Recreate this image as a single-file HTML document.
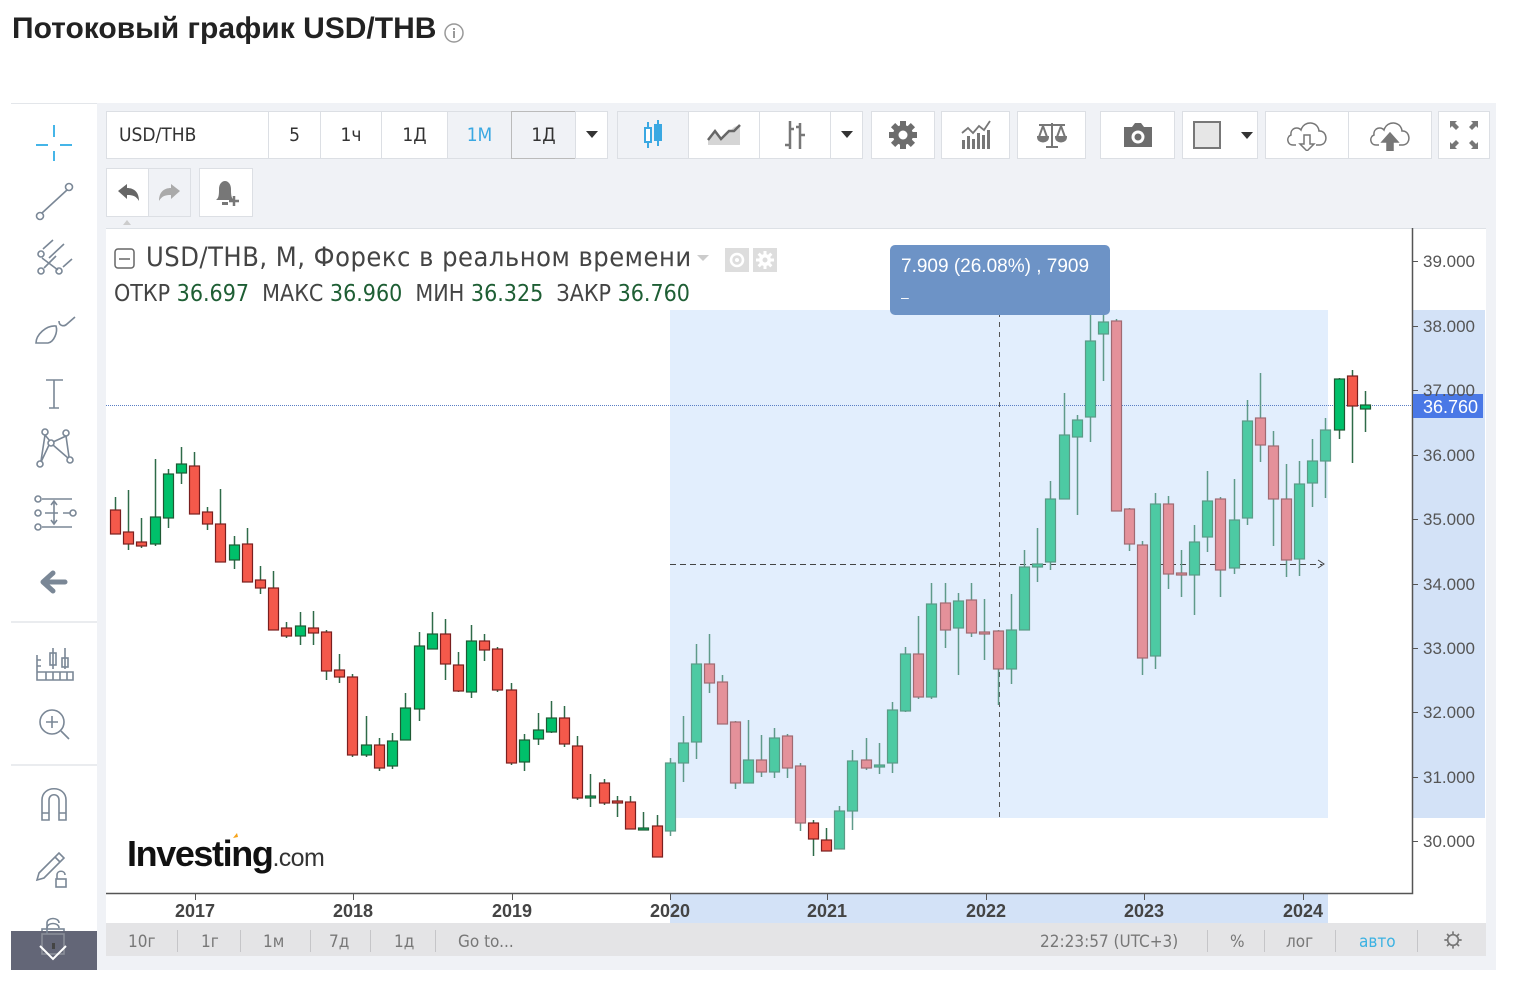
<!DOCTYPE html>
<html><head><meta charset="utf-8">
<style>
*{margin:0;padding:0;box-sizing:border-box}
body{width:1524px;height:986px;background:#fff;position:relative;overflow:hidden;font-family:"Liberation Sans","DejaVu Sans",sans-serif;color:#333}
.abs{position:absolute}
h1{position:absolute;left:12px;top:12px;font-size:30px;font-weight:bold;color:#222;letter-spacing:0px}
.panel{position:absolute;left:97px;top:103px;width:1399px;height:867px;background:#f0f2f6}
.side{position:absolute;left:11px;top:103px;width:86px;height:867px;background:#fff;border-top:1px solid #e3e6ea}
.btn{position:absolute;background:#fff;border:1px solid #dcdfe4;display:flex;align-items:center;justify-content:center;font-size:19px;color:#333;font-family:"DejaVu Sans Condensed","DejaVu Sans",sans-serif;font-stretch:condensed}
.cond{font-family:"DejaVu Sans Condensed","DejaVu Sans",sans-serif;font-stretch:condensed}
.bb{position:absolute;top:923px;height:33px;left:106px;width:1380px;background:#e4e4e6}
.bb span{position:absolute;top:9px;font-size:17px;color:#777;font-family:"DejaVu Sans Condensed","DejaVu Sans",sans-serif;font-stretch:condensed}
.bb i{position:absolute;top:7px;width:1px;height:22px;background:#c5c5c8}
</style></head><body>
<h1>Потоковый график USD/THB</h1>
<svg class="abs" style="left:443px;top:22px" width="22" height="22" viewBox="0 0 22 22"><circle cx="11" cy="11" r="9" fill="none" stroke="#999" stroke-width="1.5"/><rect x="10" y="9" width="2" height="7" fill="#999"/><rect x="10" y="6" width="2" height="2" fill="#999"/></svg>

<div class="panel"></div>
<div class="side"></div>

<svg class="abs" style="left:11px;top:103px" width="86" height="867" viewBox="0 0 86 867" fill="none" stroke="#7a8796" stroke-width="1.6">
 <g stroke="#45b5e8" stroke-width="2"><path d="M25 42h12M49 42h12M43 22v12M43 48v10"/></g>
 <path d="M31 110L56 87"/><circle cx="29" cy="113" r="3.5"/><circle cx="58" cy="84" r="3.5"/>
 <path d="M32 146l10 -9M38 155l15 -14M52 164l9 -8" /><circle cx="30" cy="151" r="3"/><circle cx="30" cy="168" r="3"/><circle cx="48" cy="168" r="3"/><path d="M31 155l16 12M33 165l12 -12"/>
 <path d="M25 240c0-8 10-18 20-17c2 6-2 16-8 17z"/><path d="M48 218c0 5 5 6 8 3l8-7"/>
 <path d="M35 277h17M43 277v28M38 305h10"/>
 <circle cx="34" cy="329" r="3"/><circle cx="55" cy="330" r="3"/><circle cx="40" cy="340" r="3"/><circle cx="29" cy="361" r="3"/><circle cx="59" cy="357" r="3"/><path d="M34 332l-4 26M34 332l5 6M55 333l-13 6M55 333l3 21M42 342l15 13M38 342l-8 17"/>
 <path d="M31 396h30M34 410h13M52 410h7M31 424h30M43 398v23"/><circle cx="27" cy="396" r="3"/><circle cx="27" cy="410" r="3"/><circle cx="27" cy="424" r="3"/><circle cx="62" cy="410" r="3"/><path d="M40 402l3-4 3 4M40 417l3 4 3-4"/>
 <path d="M34 479h20M42 470l-10 9 10 9" stroke-width="5" stroke-linecap="round" stroke-linejoin="round"/>
 <path d="M0 519h86" stroke="#e3e6ea"/>
 <path d="M26 552v25h36v-8H26M35 569v8M42 569v8M49 569v8M56 569v8M26 557h4M26 563h4M42 545v21M54 545v21"/><rect x="39" y="550" width="6" height="12"/><rect x="51" y="555" width="6" height="9"/>
 <circle cx="41" cy="619" r="12"/><path d="M50 628l8 8M35 619h12M41 613v12"/>
 <path d="M0 662h86" stroke="#e3e6ea"/>
 <path d="M31 717v-20c0-15 24-15 24 0v20h-7v-20c0-7-10-7-10 0v20z M31 710h7M48 710h7"/>
 <path d="M28 770l20-20 5 5-20 20-7 2zM44 754l5 5"/><path d="M46 776v-4c0-5 8-5 8 0" /><rect x="45" y="776" width="10" height="8"/>
 <path d="M36 826v-6c0-6 12-6 12 0"/><rect x="31" y="826" width="22" height="20"/>
</svg>
<div class="abs" style="left:11px;top:931px;width:86px;height:39px;background:#636677"></div>
<svg class="abs" style="left:11px;top:910px" width="86" height="60" fill="none" stroke="#7a8796" stroke-width="1.6"><path d="M36 24v-6c0-6 12-6 12 0"/><rect x="31" y="24" width="22" height="20" stroke="#8a8e99"/><path d="M29 36l13 13 13-13" stroke="#fff" stroke-width="2"/><rect x="41" y="33" width="3" height="6" fill="#444" stroke="none"/></svg>

<div class="btn" style="left:106px;top:111px;width:163px;height:48px;justify-content:flex-start;padding-left:12px">USD/THB</div>
<div class="btn" style="left:268px;top:111px;width:53px;height:48px">5</div>
<div class="btn" style="left:320px;top:111px;width:62px;height:48px">1ч</div>
<div class="btn" style="left:381px;top:111px;width:67px;height:48px">1Д</div>
<div class="btn" style="left:447px;top:111px;width:65px;height:48px;background:#f0f2f6;color:#3aa8e2">1М</div>
<div class="btn" style="left:511px;top:111px;width:65px;height:48px;background:#f0f2f6;border-color:#bbb">1Д</div>
<div class="btn" style="left:575px;top:111px;width:33px;height:48px"><svg width="12" height="8"><path d="M0 0h12L6 7z" fill="#333"/></svg></div>

<div class="btn" style="left:617px;top:111px;width:72px;height:48px;background:#f0f2f6"><svg width="26" height="34" fill="none" stroke="#3aa8e2" stroke-width="2"><path d="M8 4v26M18 2v26"/><rect x="5" y="10" width="6" height="14" fill="#fff"/><rect x="15" y="7" width="6" height="15" fill="#3aa8e2"/></svg></div>
<div class="btn" style="left:688px;top:111px;width:72px;height:48px"><svg width="34" height="22"><path d="M1 21V14l7-7 6 7 8-6 5-5 6-2v20z" fill="#d5d5d5"/><path d="M1 16l7-9 6 8 8-8 5 0 6-6" fill="none" stroke="#666" stroke-width="2.5"/></svg></div>
<div class="btn" style="left:759px;top:111px;width:72px;height:48px"><svg width="28" height="32" fill="none" stroke="#777" stroke-width="2.5"><path d="M9 2v28M4 26h5M9 10h4M19 4v26M19 16h5M15 8h4"/></svg></div>
<div class="btn" style="left:830px;top:111px;width:33px;height:48px"><svg width="12" height="8"><path d="M0 0h12L6 7z" fill="#333"/></svg></div>

<div class="btn" style="left:871px;top:111px;width:64px;height:48px"><svg width="30" height="30" viewBox="0 0 30 30"><g fill="#6d6d6d"><circle cx="15" cy="15" r="10"/><rect x="12" y="1" width="6" height="28"/><rect x="1" y="12" width="28" height="6"/><rect x="12" y="1" width="6" height="28" transform="rotate(45 15 15)"/><rect x="12" y="1" width="6" height="28" transform="rotate(-45 15 15)"/></g><circle cx="15" cy="15" r="4.5" fill="#fff"/></svg></div>
<div class="btn" style="left:941px;top:111px;width:69px;height:48px"><svg width="32" height="30" fill="#777"><rect x="2" y="20" width="3" height="9"/><rect x="7" y="16" width="3" height="13"/><rect x="12" y="19" width="3" height="10"/><rect x="17" y="13" width="3" height="16"/><rect x="22" y="15" width="3" height="14"/><rect x="27" y="10" width="3" height="19"/><path d="M2 13l6-5 5 5 6-7 5 4 6-9" fill="none" stroke="#777" stroke-width="1.8"/></svg></div>
<div class="btn" style="left:1017px;top:111px;width:69px;height:48px"><svg width="32" height="28" fill="none" stroke="#777" stroke-width="2"><path d="M3 4h26M16 2v24M10 26h12M7 5l-4 11M7 5l4 11M25 5l-4 11M25 5l4 11"/><path d="M2 16h10c0 6-10 6-10 0zM20 16h10c0 6-10 6-10 0z" fill="#777"/></svg></div>
<div class="btn" style="left:1100px;top:111px;width:75px;height:48px"><svg width="34" height="28"><path d="M3 6h8l3-4h6l3 4h8v20H3z" fill="#6d6d6d"/><circle cx="17" cy="16" r="6.5" fill="#fff"/><circle cx="17" cy="16" r="3.5" fill="#6d6d6d"/></svg></div>
<div class="btn" style="left:1182px;top:111px;width:76px;height:48px;justify-content:flex-start;padding-left:10px"><svg width="60" height="30"><rect x="1" y="2" width="26" height="26" fill="#e6e6e6" stroke="#777" stroke-width="2"/><path d="M48 12h12l-6 7z" fill="#333"/></svg></div>
<div class="btn" style="left:1265px;top:111px;width:84px;height:48px"><svg width="46" height="32" fill="none" stroke="#777" stroke-width="1.5"><path d="M12 26H9C3 26 2 18 7 16c-1-7 7-9 10-5 3-10 17-9 18 1 8-1 10 13 1 14h-4"/><path d="M20 16h6v9h4l-7 7-7-7h4z"/></svg></div>
<div class="btn" style="left:1348px;top:111px;width:84px;height:48px"><svg width="46" height="32" fill="none" stroke="#777" stroke-width="1.5"><path d="M12 26H9C3 26 2 18 7 16c-1-7 7-9 10-5 3-10 17-9 18 1 8-1 10 13 1 14h-4"/><path d="M20 32V23h-5l8-9 8 9h-5v9z" fill="#777"/></svg></div>
<div class="btn" style="left:1438px;top:111px;width:52px;height:48px"><svg width="30" height="30" fill="#777"><path d="M1 1h7l-2 2 4 4-3 3-4-4-2 2zM29 1h-7l2 2-4 4 3 3 4-4 2 2zM1 29h7l-2-2 4-4-3-3-4 4-2-2zM29 29h-7l2-2-4-4 3-3 4 4 2-2z"/></svg></div>

<div class="btn" style="left:106px;top:168px;width:43px;height:49px"><svg width="24" height="20"><path d="M2 8l9-7v4c7 0 12 4 12 13-3-5-6-6-12-6v4z" fill="#666"/></svg></div>
<div class="btn" style="left:148px;top:168px;width:43px;height:49px;background:#f0f2f6"><svg width="24" height="20"><path d="M22 8l-9-7v4C6 5 1 9 1 18c3-5 6-6 12-6v4z" fill="#aaa"/></svg></div>
<div class="btn" style="left:199px;top:168px;width:54px;height:49px"><svg width="32" height="30"><path d="M6 22c3-2 3-6 3-11 0-5 3-8 6-8s6 3 6 8c0 5 0 9 3 11z" fill="#777"/><rect x="12" y="24" width="6" height="3" fill="#777"/><path d="M24 18v10M19 23h10" stroke="#777" stroke-width="2.5"/></svg></div>
<svg class="abs" style="left:120px;top:218px" width="14" height="8"><path d="M3 7l4-5 4 5z" fill="#ccc"/></svg>

<svg class="abs" style="left:0;top:0" width="1524" height="986" id="ch">
 <rect x="106" y="228" width="1380" height="695" fill="#fff"/>
 <rect x="106" y="228" width="1380" height="1" fill="#dde1e6"/>
 <rect x="670" y="310" width="658" height="508" fill="#e2eefd"/>
 <rect x="670" y="894" width="658" height="29" fill="#d3e2f7"/>
 <rect x="1413" y="310" width="72" height="508" fill="#d3e2f7"/>
 <path d="M670 564.5H1322" stroke="#444" stroke-dasharray="6 4" stroke-width="1"/>
 <path d="M1318 560l6 4-6 4" stroke="#444" fill="none"/>
 <path d="M999.5 312V818" stroke="#555" stroke-dasharray="5 5" stroke-width="1"/>
 <path d="M106 405.5H1412" stroke="#5a7ec4" stroke-dasharray="1 1" stroke-width="1"/>
 <g id="cd"></g>
 <path d="M106 893.5H1412.5V228" stroke="#555" stroke-width="1.5" fill="none"/>
 <g stroke="#555" id="ticks"></g>
 <rect x="1413" y="394" width="70" height="24" fill="#4a78e6"/>
 <text x="1423" y="413" fill="#fff" font-size="18" font-family="Liberation Sans">36.760</text>
 <g font-family="Liberation Sans" font-size="17" fill="#555">
  <text x="1423" y="267">39.000</text><text x="1423" y="332">38.000</text><text x="1423" y="396">37.000</text>
  <text x="1423" y="461">36.000</text><text x="1423" y="525">35.000</text><text x="1423" y="590">34.000</text>
  <text x="1423" y="654">33.000</text><text x="1423" y="718">32.000</text><text x="1423" y="783">31.000</text><text x="1423" y="847">30.000</text>
 </g>
 <g font-family="Liberation Sans" font-size="18" font-weight="bold" fill="#444" text-anchor="middle">
  <text x="195" y="917">2017</text><text x="353" y="917">2018</text><text x="512" y="917">2019</text><text x="670" y="917">2020</text>
  <text x="827" y="917">2021</text><text x="986" y="917">2022</text><text x="1144" y="917">2023</text><text x="1303" y="917">2024</text>
 </g>
 <rect x="890" y="245" width="220" height="70" rx="5" fill="#6d93c6"/>
 <text x="901" y="272" fill="#fff" font-size="19" font-family="Liberation Sans">7.909 (26.08%) , 7909</text>
 <text x="901" y="302" fill="#fff" font-size="14" font-family="Liberation Sans">–</text>
 <text x="127" y="866" font-family="Liberation Sans" font-size="36" font-weight="bold" fill="#111" letter-spacing="-1.4">Investing<tspan font-size="25" font-weight="normal" fill="#333" letter-spacing="-0.6">.com</tspan></text>
 <path d="M233 838l4-5 1 4z" fill="#f6a31a"/>
</svg>

<svg class="abs" style="left:114px;top:248px" width="22" height="22"><rect x="1" y="1" width="19" height="19" rx="3" fill="#fff" stroke="#666" stroke-width="1.5"/><path d="M5 11h11" stroke="#666" stroke-width="1.5"/></svg>
<div class="abs cond" style="left:146px;top:242px;font-size:27px;letter-spacing:0.5px;color:#444;white-space:nowrap">USD/THB, М, Форекс в реальном времени</div>
<svg class="abs" style="left:697px;top:255px" width="12" height="8"><path d="M0 0h12L6 6z" fill="#ccc"/></svg>
<div class="abs" style="left:725px;top:248px;width:24px;height:24px;background:#ddd"></div>
<svg class="abs" style="left:725px;top:248px" width="24" height="24"><circle cx="12" cy="12" r="6" fill="none" stroke="#fff" stroke-width="2.5"/><circle cx="12" cy="12" r="2" fill="#fff"/></svg>
<div class="abs" style="left:753px;top:248px;width:24px;height:24px;background:#ddd"></div>
<svg class="abs" style="left:753px;top:248px" width="24" height="24"><g fill="#fff"><circle cx="12" cy="12" r="6"/><rect x="10.5" y="3" width="3" height="18"/><rect x="3" y="10.5" width="18" height="3"/><rect x="10.5" y="3" width="3" height="18" transform="rotate(45 12 12)"/><rect x="10.5" y="3" width="3" height="18" transform="rotate(-45 12 12)"/></g><circle cx="12" cy="12" r="2.5" fill="#ddd"/></svg>
<div class="abs cond" style="left:114px;top:281px;font-size:23px;color:#444;white-space:nowrap;letter-spacing:0px">ОТКР <span style="color:#1e5e34">36.697</span>&nbsp;&nbsp;МАКС <span style="color:#1e5e34">36.960</span>&nbsp;&nbsp;МИН <span style="color:#1e5e34">36.325</span>&nbsp;&nbsp;ЗАКР <span style="color:#1e5e34">36.760</span></div>

<div class="bb">
 <span style="left:22px">10г</span><i style="left:71px"></i>
 <span style="left:95px">1г</span><i style="left:134px"></i>
 <span style="left:157px">1м</span><i style="left:204px"></i>
 <span style="left:223px">7д</span><i style="left:264px"></i>
 <span style="left:288px">1д</span><i style="left:329px"></i>
 <span style="left:352px">Go to...</span>
 <span style="left:934px">22:23:57 (UTC+3)</span><i style="left:1101px"></i>
 <span style="left:1124px">%</span><i style="left:1158px"></i>
 <span style="left:1180px">лог</span><i style="left:1229px"></i>
 <span style="left:1253px;color:#3cb2e2">авто</span><i style="left:1311px"></i>
 <svg style="position:absolute;left:1337px;top:7px" width="20" height="20" viewBox="0 0 30 30"><g fill="none" stroke="#777" stroke-width="2.5"><circle cx="15" cy="15" r="8"/><path d="M15 2v6M15 22v6M2 15h6M22 15h6M6 6l4 4M20 20l4 4M24 6l-4 4M10 20l-4 4"/></g></svg>
</div>

<script>
var C=[[115,497,510,534,534,0],[128,490,532,544,550,0],[141,518,542,546,548,0],[155,459,517,544,546,1],[168,469,474,518,528,1],[181,447,464,473,484,1],[194,452,466,514,514,0],[207,507,512,524,530,0],[220,489,524,562,562,0],[234,536,545,560,569,1],[247,528,544,582,582,0],[260,566,580,588,594,0],[273,571,588,630,630,0],[286,622,628,636,638,0],[300,612,626,636,645,1],[313,611,628,633,645,0],[326,630,632,671,680,0],[339,654,670,677,683,0],[352,674,677,755,757,0],[366,716,745,755,757,1],[379,738,745,768,771,0],[392,733,741,766,769,1],[405,693,708,740,740,1],[419,632,646,709,721,1],[432,612,634,649,649,1],[445,619,634,664,680,0],[458,652,665,691,692,0],[471,625,641,692,698,1],[484,634,641,650,661,0],[497,647,649,690,692,0],[511,683,690,763,765,0],[524,734,740,762,771,1],[538,713,730,739,745,1],[551,701,718,732,733,1],[564,706,718,744,747,0],[577,736,746,798,800,0],[590,774,796,798,807,1],[604,779,783,803,805,0],[617,796,801,803,817,0],[630,796,802,829,829,0],[643,812,828,829,829,1],[657,815,826,857,857,0],[670,758,763,831,836,1],[683,716,743,763,782,1],[696,644,664,742,759,1],[709,634,664,683,693,0],[722,675,682,724,724,0],[735,721,722,783,789,0],[748,720,760,783,783,1],[761,735,760,772,777,0],[774,728,738,772,778,1],[787,734,736,768,778,0],[800,763,766,823,831,0],[813,820,823,839,856,0],[826,828,840,851,851,0],[839,806,811,849,849,1],[852,750,761,811,830,1],[866,738,760,768,770,0],[879,743,765,767,774,1],[892,702,710,763,773,1],[905,647,654,711,712,1],[918,616,654,697,699,0],[931,583,604,697,699,1],[945,583,603,630,648,0],[958,593,601,628,675,1],[971,583,600,633,637,0],[984,599,632,634,660,0],[998,630,631,669,705,0],[1011,594,630,669,684,1],[1024,550,567,630,630,1],[1037,528,564,567,582,1],[1050,481,499,562,570,1],[1064,393,435,499,499,1],[1077,415,420,437,515,1],[1090,296,341,417,442,1],[1103,296,322,334,381,1],[1116,319,321,511,511,0],[1129,508,509,544,551,0],[1142,541,545,658,675,0],[1155,493,504,656,669,1],[1168,496,504,574,589,0],[1181,550,573,575,597,0],[1194,525,542,575,615,1],[1207,471,501,537,552,1],[1220,497,499,570,597,0],[1234,479,520,568,574,1],[1247,400,421,518,525,1],[1260,373,418,445,462,0],[1273,431,446,499,546,0],[1286,464,499,560,577,0],[1299,461,484,559,576,1],[1312,439,461,483,507,1],[1325,418,430,461,498,1],[1339,378,379,430,439,1],[1352,370,376,406,463,0],[1365,391,405,409,432,1]];
var s='';C.forEach(function(c){var x=c[0],inz=(x>=670&&x<=1328&&c[1]<818),g=c[5];
var fill=g?(inz?'#4dcaa3':'#00c06a'):(inz?'#e4919a':'#f4594b');var st=g?(inz?'#5a9a86':'#1e5a34'):(inz?'#a06a72':'#7a1f1f');var wk=inz?'#5f9a8a':'#2e6b48';
s+='<path d="M'+(x+0.5)+' '+c[1]+'V'+c[4]+'" stroke="'+wk+'" stroke-width="1.5"/>';
var h=Math.max(2,c[3]-c[2]);s+='<rect x="'+(x-4.5)+'" y="'+c[2]+'" width="10" height="'+h+'" fill="'+fill+'" stroke="'+st+'" stroke-width="1.2"/>';});
document.getElementById('cd').innerHTML=s;
var t='';[261,326,390,455,519,584,648,712,777,841].forEach(function(y){t+='<path d="M1413 '+(y+.5)+'h5"/>'});
[195,353,512,670,827,986,1144,1303].forEach(function(x){t+='<path d="M'+(x+.5)+' 894v6"/>'});
document.getElementById('ticks').innerHTML=t;
</script>
</body></html>
